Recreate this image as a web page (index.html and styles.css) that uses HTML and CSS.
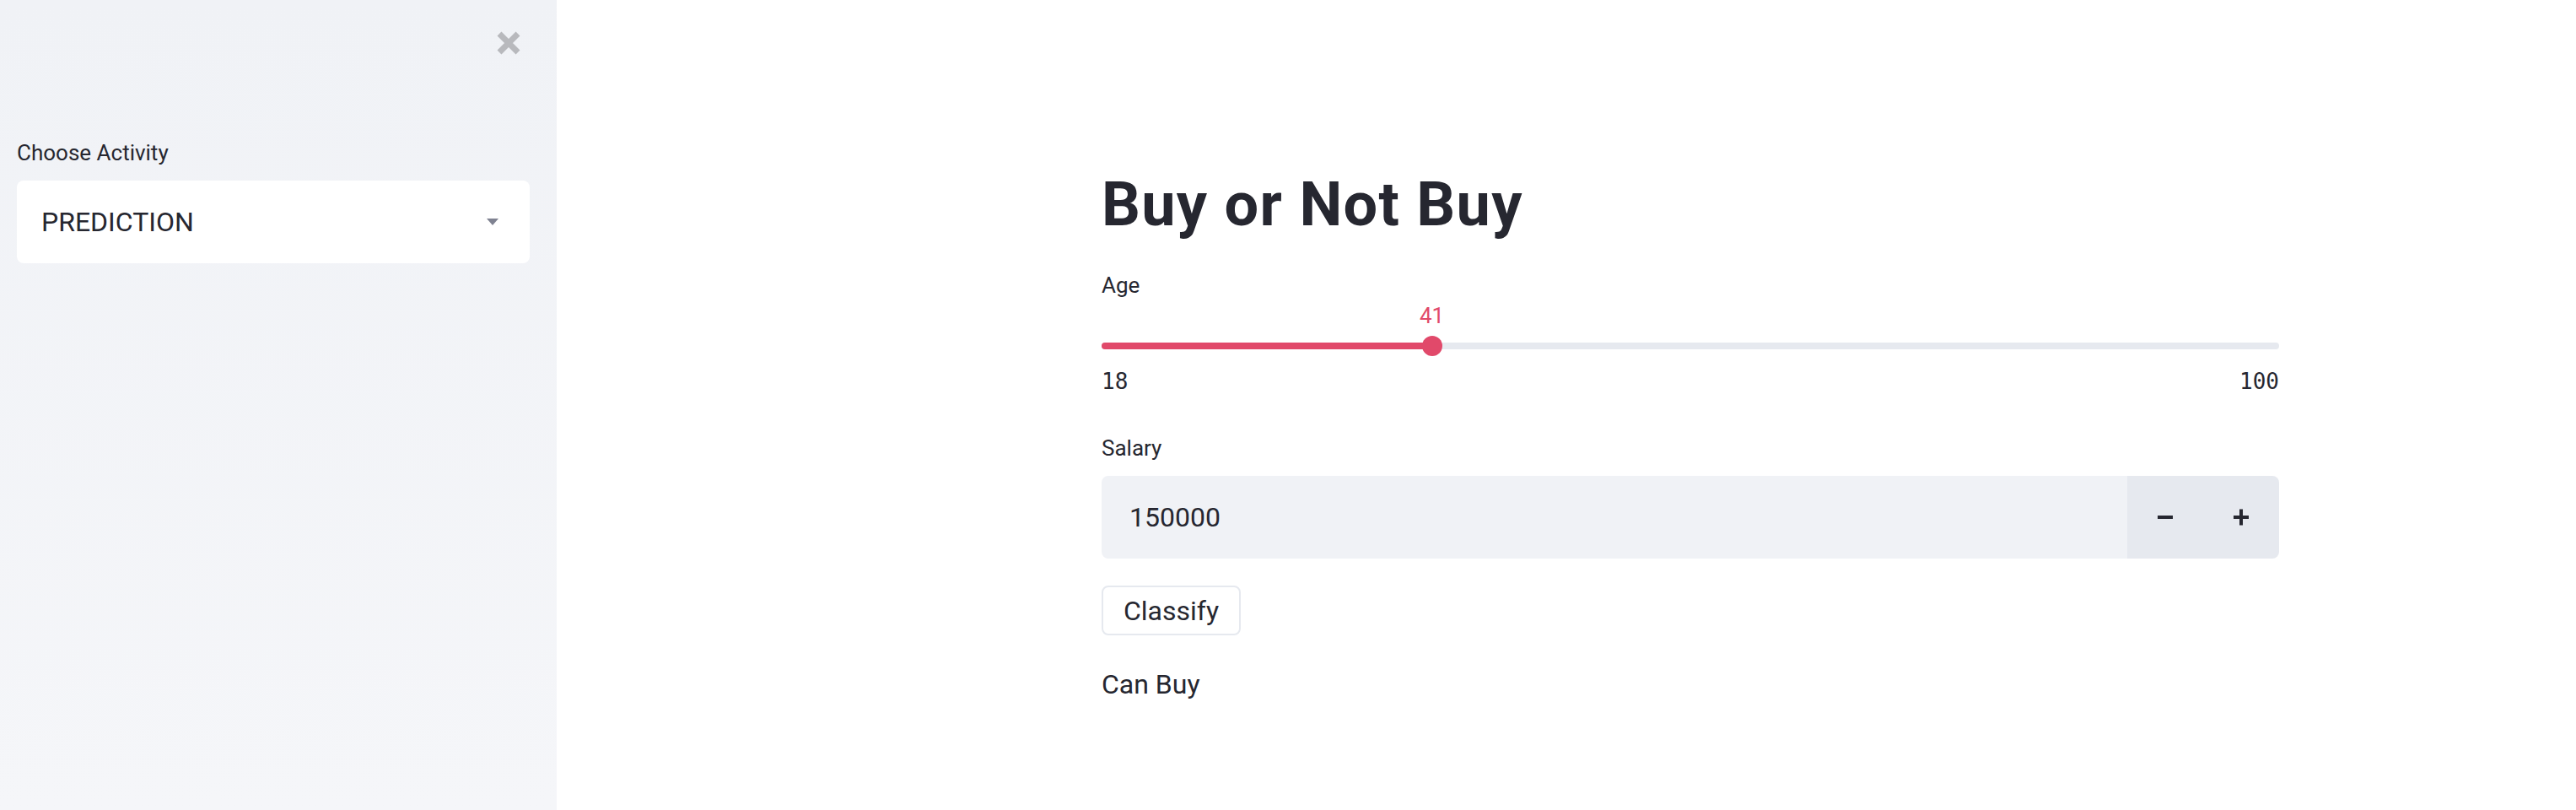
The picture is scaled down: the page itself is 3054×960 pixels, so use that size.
FILE: index.html
```html
<!DOCTYPE html>
<html lang="en">
<head>
<meta charset="utf-8">
<title>Buy or Not Buy</title>
<link rel="stylesheet" href="styles.css">
</head>
<body>
  <aside class="sidebar">
    <div class="sidebar-top">
      <button class="close" aria-label="Close sidebar">
        <svg width="30" height="30" viewBox="0 0 30 30"><path d="M4 4 L26 26 M26 4 L4 26" stroke="#b8b9bd" stroke-width="7"/></svg>
      </button>
    </div>
    <p class="field-label sidebar-label">Choose Activity</p>
    <div class="select">
      <span>PREDICTION</span>
      <svg width="14" height="8" viewBox="0 0 14 8"><polygon points="0,0 14,0 7,8" fill="#7f8291"/></svg>
    </div>
  </aside>
  <main class="main">
    <div class="block">
      <h1 class="title">Buy or Not Buy</h1>
      <p class="field-label age-label">Age</p>
      <div class="slider">
        <div class="track">
          <div class="fill" style="width:28.05%"></div>
          <div class="thumb" style="left:28.05%"><span class="thumb-value">41</span></div>
        </div>
      </div>
      <div class="ticks"><span>18</span><span>100</span></div>
      <p class="field-label salary-label">Salary</p>
      <div class="number-input">
        <div class="number-field">150000</div>
        <div class="step"><svg width="20" height="20" viewBox="0 0 20 20"><path d="M1 10 H19" stroke="#262730" stroke-width="4"/></svg></div>
        <div class="step"><svg width="20" height="20" viewBox="0 0 20 20"><path d="M1 10 H19 M10 0.5 V19.5" stroke="#262730" stroke-width="4"/></svg></div>
      </div>
      <div class="button-row"><button class="btn">Classify</button></div>
      <p class="result">Can Buy</p>
    </div>
  </main>
</body>
</html>
```

FILE: styles.css
```css
html, body {
  margin: 0;
  padding: 0;
}
body {
  display: flex;
  height: 960px;
  font-family: Roboto, "Noto Sans", "Liberation Sans", sans-serif;
  color: #262730;
  background: #ffffff;
  overflow: hidden;
}
.sidebar {
  flex: none;
  width: 660px;
  box-sizing: border-box;
  padding: 36px 32px 0 20px;
  background: linear-gradient(180deg, #f0f2f6 0%, #f5f6f9 100%);
}
.sidebar-top {
  display: flex;
  justify-content: flex-end;
  padding-right: 10px;
  height: 30px;
}
.close {
  border: 0;
  padding: 0;
  margin: 0;
  background: transparent;
  width: 30px;
  height: 30px;
  display: block;
}
.close svg {
  display: block;
}
.field-label {
  margin: 0;
  font-size: 26px;
  line-height: 39px;
  color: #262730;
}
.sidebar-label {
  margin-top: 96px;
}
.select {
  margin-top: 13px;
  height: 98px;
  box-sizing: border-box;
  background: #ffffff;
  border-radius: 8px;
  display: flex;
  align-items: center;
  justify-content: space-between;
  padding: 0 37px 0 29px;
  font-size: 32px;
}
.main {
  flex: 1;
  padding: 200px 0 0 646px;
}
.block {
  width: 1396px;
}
.title {
  margin: 0;
  font-size: 72px;
  line-height: 86px;
  font-weight: 700;
  letter-spacing: 1.3px;
  color: #262730;
}
.age-label {
  margin-top: 33px;
}
.slider {
  padding-top: 40px;
  height: 24px;
  display: flex;
  align-items: center;
}
.track {
  position: relative;
  width: 100%;
  height: 8px;
  border-radius: 4px;
  background: #e6e9ef;
}
.fill {
  height: 100%;
  border-radius: 4px;
  background: #e1496a;
}
.thumb {
  position: absolute;
  top: 50%;
  width: 24px;
  height: 24px;
  border-radius: 50%;
  background: #e1496a;
  transform: translate(-50%, -50%);
}
.thumb-value {
  position: absolute;
  bottom: calc(100% + 11px);
  left: 50%;
  transform: translateX(-50%);
  font-size: 26px;
  line-height: 26px;
  color: #e1496a;
  white-space: nowrap;
}
.ticks {
  margin-top: 15px;
  display: flex;
  justify-content: space-between;
  font-family: "DejaVu Sans Mono", "Liberation Mono", monospace;
  font-size: 26px;
  line-height: 30px;
  color: #262730;
}
.salary-label {
  margin-top: 45px;
}
.number-input {
  margin-top: 13px;
  height: 98px;
  display: flex;
  border-radius: 8px;
  overflow: hidden;
}
.number-field {
  flex: 1;
  display: flex;
  align-items: center;
  padding-left: 33px;
  background: #f0f2f6;
  font-size: 32px;
}
.step {
  width: 90px;
  display: flex;
  align-items: center;
  justify-content: center;
  background: #e6e9ef;
}
.step svg {
  display: block;
}
.button-row {
  margin-top: 32px;
  display: flex;
}
.btn {
  height: 59px;
  box-sizing: border-box;
  border: 2px solid #e6e9ef;
  border-radius: 8px;
  background: #ffffff;
  padding: 0 24px;
  font-family: Roboto, "Noto Sans", "Liberation Sans", sans-serif;
  font-size: 32px;
  color: #262730;
  display: flex;
  align-items: center;
}
.result {
  margin: 34px 0 0;
  font-size: 32px;
  line-height: 48px;
  color: #262730;
}
```
